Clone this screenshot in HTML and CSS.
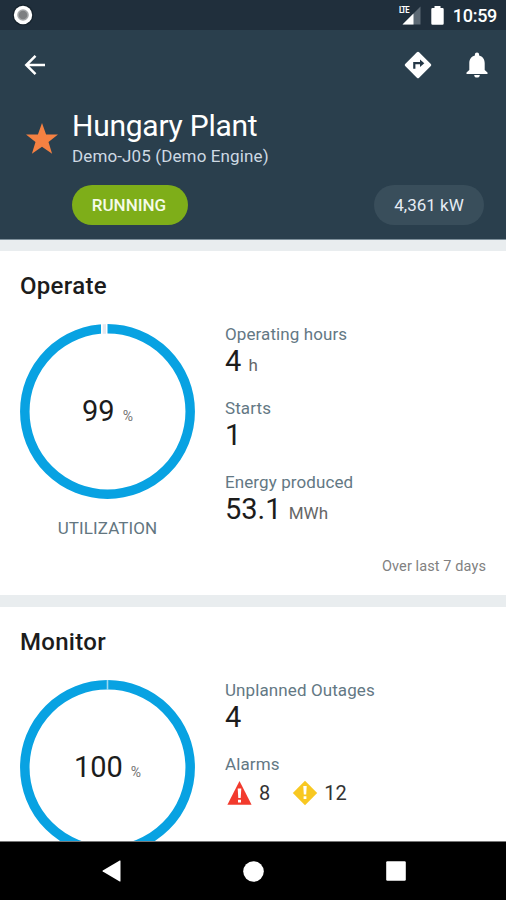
FILE: index.html
```html
<!DOCTYPE html>
<html lang="en">
<head>
<meta charset="utf-8">
<title>Hungary Plant</title>
<link rel="stylesheet" href="styles.css">
</head>
<body>
<div class="screen">
  <div class="status-bar">
    <svg class="rec" width="22" height="22" viewBox="0 0 22 22"><circle cx="11" cy="11" r="10.500" fill="#15222c"/><circle cx="11" cy="11" r="9.200" fill="#fff"/><circle cx="11" cy="11" r="5.800" fill="#a6a8aa"/><circle cx="11" cy="11" r="4.300" fill="#7d7f81"/></svg>
    <div class="signal">
      <span class="lte">LTE</span>
      <svg width="19" height="19" viewBox="0 0 19 19"><path d="M18.500 0.500V18.500H0.500Z" fill="#5d6a75"/><path d="M11.500 7.500V18.500H0.500Z" fill="#fff"/></svg>
    </div>
    <svg class="battery" width="13" height="19" viewBox="0 0 13 19"><path d="M3.500 0h6v2H11.500q1.200 0 1.200 1.200V17.600q0 1.200-1.200 1.200H1.500q-1.200 0-1.200-1.200V3.200Q.3 2 1.500 2h2z" fill="#fff"/></svg>
    <span class="clock">10:59</span>
  </div>
  <header class="header">
    <div class="app-bar">
      <svg class="back" width="22" height="22" viewBox="0 0 22 22" fill="none" stroke="#fff" stroke-width="2.500"><path d="M21 11H2.500M11.500 1.800L2.300 11l9.200 9.200"/></svg>
      <svg class="directions" width="28" height="28" viewBox="0 0 28 28"><path d="M12.900 1.200q1.100-1 2.200 0L26.800 12.900q1 1.100 0 2.200L15.100 26.800q-1.100 1-2.200 0L1.200 15.100q-1-1.100 0-2.200z" fill="#fff"/><path d="M10.300 17.700v-5.500h7.500" fill="none" stroke="#243746" stroke-width="2.200"/><path d="M16 8.500l4.300 3.700L16 15.900z" fill="#243746"/></svg>
      <svg class="bell" width="22" height="26" viewBox="0 0 22 26"><path d="M11 25.500a2.800 2.800 0 0 0 2.800-2.600H8.200a2.800 2.800 0 0 0 2.800 2.600zM18.700 18v-6.800c0-3.800-2-6.700-5.600-7.600v-1c0-1.200-.9-2.100-2.100-2.100s-2.100.9-2.100 2.100v1c-3.600.9-5.600 3.800-5.600 7.600V18L.5 20.600V22h21v-1.400z" fill="#fff"/></svg>
    </div>
    <div class="plant">
      <svg class="star" width="32" height="31" viewBox="0 0 32 31"><path d="M16 0l4.100 11.400L32 11.600l-9.500 7.400 3.600 11.700L16 23.800 5.900 30.700 9.500 19 0 11.600l11.900-.2z" fill="#f58142"/></svg>
      <div class="plant-text">
        <h1>Hungary Plant</h1>
        <p>Demo-J05 (Demo Engine)</p>
      </div>
    </div>
    <div class="pills">
      <span class="pill running">RUNNING</span>
      <span class="pill power">4,361 kW</span>
    </div>
  </header>
  <main class="content">
    <section class="card operate">
      <h2>Operate</h2>
      <div class="columns">
        <div class="gauge">
          <div class="dial">
            <svg width="175" height="175" viewBox="0 0 175 175"><circle cx="87.500" cy="87.500" r="82.700" fill="none" stroke="#08a2e2" stroke-width="9.500"/><path d="M81 0h6.500v11H81z" fill="#fff"/><path d="M82.700 .2h3.300v9.600h-3.300z" fill="#e4e8f0"/></svg>
            <div class="reading"><span class="num">99</span><span class="pct">%</span></div>
          </div>
          <div class="caption">UTILIZATION</div>
        </div>
        <dl class="stats">
          <dt>Operating hours</dt><dd>4 <small>h</small></dd>
          <dt>Starts</dt><dd>1</dd>
          <dt>Energy produced</dt><dd>53.1 <small>MWh</small></dd>
        </dl>
      </div>
      <p class="period">Over last 7 days</p>
    </section>
    <section class="card monitor">
      <h2>Monitor</h2>
      <div class="columns">
        <div class="gauge">
          <div class="dial">
            <svg width="175" height="175" viewBox="0 0 175 175"><circle cx="87.500" cy="87.500" r="82.700" fill="none" stroke="#08a2e2" stroke-width="9.500"/><path d="M86.700 0h1.600v10h-1.600z" fill="#9bd9f2"/></svg>
            <div class="reading"><span class="num">100</span><span class="pct">%</span></div>
          </div>
        </div>
        <dl class="stats">
          <dt>Unplanned Outages</dt><dd>4</dd>
          <dt>Alarms</dt>
          <dd class="alarms">
            <svg class="alert" width="25" height="24" viewBox="0 0 25 24"><path d="M12.500 0L24.600 23.800H.4z" fill="#f23a2d"/><path d="M10.700 7.500h3.600l-.6 9.500h-2.400zM11 18.800h3v2.700h-3z" fill="#fff"/></svg>
            <span class="count first">8</span>
            <svg class="warn" width="26" height="26" viewBox="0 0 26 26"><path d="M13 .8L25.200 13 13 25.200.8 13z" fill="#f8c821"/><path d="M11.300 6h3.400l-.5 8.500h-2.400zM11.600 16.300h2.800V19h-2.800z" fill="#fff"/></svg>
            <span class="count">12</span>
          </dd>
        </dl>
      </div>
    </section>
  </main>
  <nav class="nav-bar">
    <svg width="19" height="22" viewBox="0 0 19 22"><path d="M18.500 1v20q0 .8-.8.4L.8 11.600q-.8-.6 0-1.200L17.700.6q.8-.4.800.4z" fill="#fff"/></svg>
    <svg width="21" height="21" viewBox="0 0 21 21"><circle cx="10.500" cy="10.500" r="10.300" fill="#fff"/></svg>
    <svg width="20" height="20" viewBox="0 0 20 20"><rect x=".2" y=".2" width="19.600" height="19.600" rx="1.200" fill="#fff"/></svg>
  </nav>
</div>
</body>
</html>
```
FILE: styles.css
```css
* { box-sizing: border-box; margin: 0; padding: 0; }
body { font-family: Roboto, "Liberation Sans", sans-serif; background: #fff; }
svg { display: block; flex: none; }
.screen { width: 506px; height: 900px; display: flex; flex-direction: column; overflow: hidden; white-space: nowrap; }

.status-bar { flex: none; height: 30px; background: #202f3c; display: flex; align-items: flex-start; padding: 4px 9px 0 12px; }
.signal { display: flex; margin: 2px 0 0 auto; }
.lte { width: 4px; font-size: 9px; line-height: 9px; font-weight: 700; letter-spacing: -1.1px; color: #fff; transform: translateX(4px) scaleX(0.85); transform-origin: left; }
.signal svg { margin-left: 3px; }
.battery { margin: 2px 9px 0 10px; }
.clock { font-size: 18px; line-height: 24px; font-weight: 500; letter-spacing: -0.3px; color: #fff; }

.header { flex: none; height: 210px; background: #2a3f4d; border-bottom: 1px solid #7e909b; }
.app-bar { height: 78px; display: flex; align-items: center; padding: 0 18px 9px 24px; }
.back { margin-right: auto; }
.directions { margin-right: 34px; }
.plant { display: flex; padding-left: 26px; }
.star { margin: 15px 14px 0 0; }
.plant-text { color: #fff; }
h1 { font-size: 30px; line-height: 36px; font-weight: 400; letter-spacing: -0.25px; }
.plant-text p { font-size: 17px; line-height: 22px; margin-top: 1px; letter-spacing: 0.12px; color: #ced9e3; }
.pills { display: flex; justify-content: space-between; margin: 18px 22px 0 72px; }
.pill { height: 40px; border-radius: 20px; line-height: 40px; font-size: 17px; text-align: center; }
.running { width: 116px; padding-right: 2px; background: #7eae19; color: #f5fbe8; font-weight: 500; }
.power { width: 110px; background: #394e5b; color: #e6ecf4; }

.content { flex: 1; min-height: 0; overflow: hidden; background: #e9edef; border-bottom: 1px solid #777; padding-top: 11px; display: flex; flex-direction: column; gap: 12px; }
.card { flex: none; background: #fff; padding: 20px 20px 0; }
.operate, .monitor { height: 344px; }
h2 { font-size: 24px; line-height: 30px; font-weight: 500; letter-spacing: 0.3px; color: #1c1c1c; }
.columns { display: flex; gap: 30px; margin-top: 23px; }
.gauge { width: 175px; }
.dial { display: grid; height: 175px; }
.dial > * { grid-area: 1 / 1; }
.reading { display: flex; justify-content: center; align-items: baseline; gap: 8px; line-height: 34px; align-self: center; padding-top: 3px; color: #1c1c1c; }
.num { font-size: 29px; }
.pct { font-size: 14px; color: #737373; }
.caption { margin-top: 19px; font-size: 17px; line-height: 20px; letter-spacing: 0.1px; text-align: center; color: #637680; }
.stats { color: #1c1c1c; }
dt { font-size: 17px; line-height: 20px; letter-spacing: 0.1px; color: #637884; }
dd { font-size: 29px; line-height: 32px; margin: 1px 0 21px; }
dd small { font-size: 17px; line-height: 0; color: #666; }
.period { margin-top: 14px; font-size: 14.500px; line-height: 18px; letter-spacing: 0.1px; text-align: right; color: #818181; }
.operate .columns { height: 220px; }
.alarms { display: flex; align-items: center; font-size: 20px; line-height: 28px; margin-top: 5px; color: #333; }
.alert { margin-left: 2px; }
.first { margin: 0 22px 0 7px; }
.warn { margin-right: 6px; }

.nav-bar { flex: none; height: 58px; background: #000; display: flex; align-items: center; justify-content: space-between; padding: 0 100px 0 102px; }
```
